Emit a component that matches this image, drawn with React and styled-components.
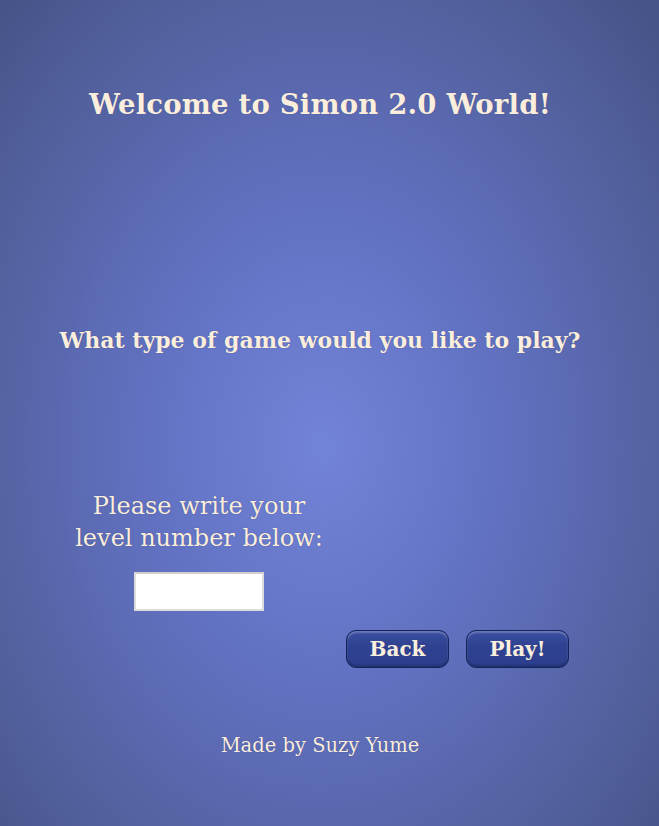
import styled, { createGlobalStyle } from "styled-components";

const GlobalStyle = createGlobalStyle`
  html, body {
    margin: 0;
    padding: 0;
    height: 100%;
  }
  body {
    font-family: "DejaVu Serif", "Liberation Serif", serif;
    background: radial-gradient(ellipse 70% 75% at 49% 54%, #7284d8 0%, #6373c4 35%, #53619f 75%, #465388 100%);
    min-height: 826px;
  }
`;

const Page = styled.main`
  height: 826px;
  padding-right: 19px;
  display: flex;
  flex-direction: column;
  align-items: center;
  color: #fbeedd;
  text-shadow: 0 0 1px #3a4790;
`;

const Title = styled.h1`
  margin: 88px 0 0;
  font-size: 27.5px;
  font-weight: bold;
  letter-spacing: 0.2px;
`;

const Question = styled.h2`
  margin: 207px 0 0;
  font-size: 22px;
  font-weight: bold;
`;

const Controls = styled.section`
  margin-top: 137px;
  width: 100%;
  display: grid;
  grid-template-columns: 398px 1fr;
`;

const LevelColumn = styled.div`
  display: flex;
  flex-direction: column;
  align-items: center;
`;

const Prompt = styled.p`
  margin: 0;
  text-align: center;
  font-size: 24px;
  line-height: 32px;
`;

const LevelInput = styled.input`
  margin-top: 18px;
  width: 130px;
  height: 39px;
  box-sizing: border-box;
  border: 2px solid #dcdcdc;
  border-top-color: #d0d0d0;
  background: #fff;
  outline: none;
`;

const ButtonRow = styled.div`
  grid-column: 1 / 3;
  display: flex;
  gap: 17px;
  padding-left: 346px;
  margin-top: 19px;
`;

const GameButton = styled.button`
  width: 103px;
  height: 38px;
  border-radius: 10px;
  border: 1px solid #15235c;
  background: linear-gradient(#3a4ea0 0%, #2f4292 40%, #2c3e8c 100%);
  box-shadow: inset 0 2px 2px rgba(255, 255, 255, 0.25), inset 0 -2px 2px rgba(0, 0, 0, 0.2);
  color: #fbeedd;
  font-family: "DejaVu Serif", "Liberation Serif", serif;
  font-weight: bold;
  font-size: 20px;
  cursor: pointer;
`;

const Footer = styled.footer`
  margin-top: 66px;
  font-size: 19.5px;
`;

export default function App() {
  return (
    <>
      <GlobalStyle />
      <Page>
        <Title>Welcome to Simon 2.0 World!</Title>
        <Question>What type of game would you like to play?</Question>
        <Controls>
          <LevelColumn>
            <Prompt>
              Please write your
              <br />
              level number below:
            </Prompt>
            <LevelInput type="text" />
          </LevelColumn>
          <div />
          <ButtonRow>
            <GameButton>Back</GameButton>
            <GameButton>Play!</GameButton>
          </ButtonRow>
        </Controls>
        <Footer>Made by Suzy Yume</Footer>
      </Page>
    </>
  );
}
